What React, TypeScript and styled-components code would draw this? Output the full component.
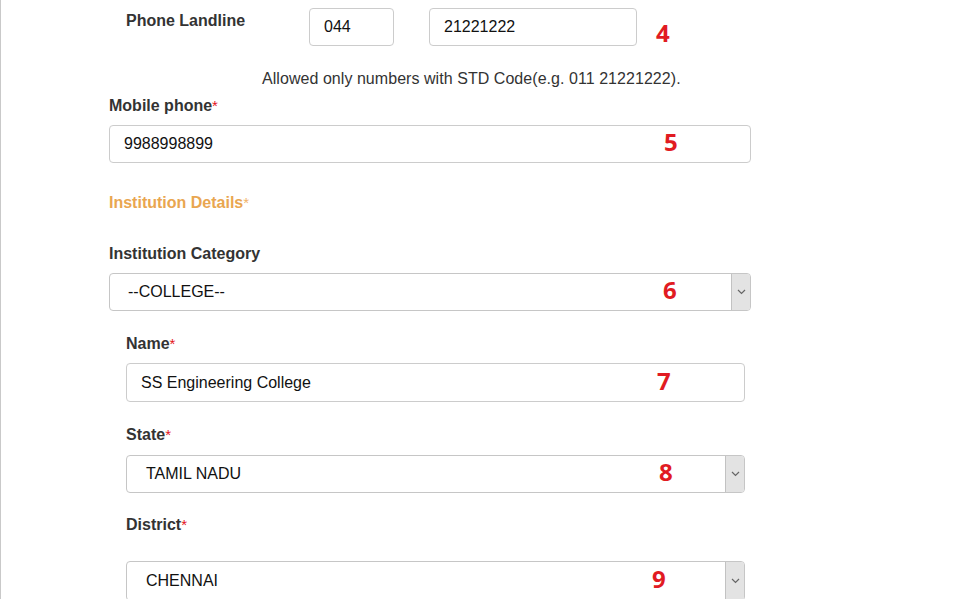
import React from "react";
import styled, { createGlobalStyle } from "styled-components";

const Global = createGlobalStyle`
  html, body { margin: 0; padding: 0; background: #fff; }
  body { font-family: "Liberation Sans", Arial, sans-serif; color: #333; }
`;

const Page = styled.div`
  width: 959px;
  height: 599px;
  box-sizing: border-box;
  border-left: 1px solid #c9c9c9;
  overflow: hidden;
  padding: 8px 0 0 108px;
`;

const Label = styled.div<{ $top?: number }>`
  font-size: 16px;
  line-height: 18px;
  font-weight: bold;
  color: #333;
  margin-top: ${(p) => p.$top ?? 0}px;
`;

const Star = styled.span<{ $soft?: boolean }>`
  color: ${(p) => (p.$soft ? "#f0b36a" : "#e4141b")};
  font-size: 15px;
  font-weight: normal;
`;

const SectionTitle = styled.div<{ $top: number }>`
  font-size: 16px;
  line-height: 18px;
  font-weight: bold;
  color: #e9a650;
  margin-top: ${(p) => p.$top}px;
`;

const LandlineRow = styled.div`
  display: flex;
  align-items: flex-start;
  padding-left: 17px;
`;

const LandlineLabel = styled(Label)`
  width: 183px;
  margin-top: 4px;
`;

const Box = styled.div<{ $w: number; $h?: number; $top?: number }>`
  position: relative;
  box-sizing: border-box;
  width: ${(p) => p.$w}px;
  height: ${(p) => p.$h ?? 38}px;
  margin-top: ${(p) => p.$top ?? 0}px;
  border: 1px solid #cccccc;
  border-radius: 4px;
  background: #fff;
  display: flex;
  align-items: center;
  padding-left: 14px;
  font-size: 16px;
  color: #111;
`;

const SelectBox = styled(Box)<{ $pad: number }>`
  padding-left: ${(p) => p.$pad}px;
  border-color: #c6c6c6;
`;

const Gap = styled.div<{ $w: number }>`
  width: ${(p) => p.$w}px;
  flex: none;
`;

const Marker = styled.div<{ $left?: number }>`
  position: ${(p) => (p.$left !== undefined ? "absolute" : "static")};
  left: ${(p) => p.$left ?? 0}px;
  top: 50%;
  transform: ${(p) => (p.$left !== undefined ? "translateY(calc(-50% - 2px))" : "none")};
  font-family: "Open Sans", "Liberation Sans", sans-serif;
  font-weight: bold;
  font-size: 24px;
  line-height: 28px;
  color: #e11b22;
`;

const LandMarker = styled(Marker)`
  margin-left: 19px;
  margin-top: 11px;
`;

const Hint = styled.div`
  font-size: 16px;
  line-height: 18px;
  color: #333;
  margin-top: 23px;
  padding-left: 153px;
  letter-spacing: 0.05px;
`;

const Indent = styled.div`
  padding-left: 17px;
`;

const ArrowBtn = styled.div`
  position: absolute;
  right: 0;
  top: 0;
  bottom: 0;
  width: 19px;
  box-sizing: border-box;
  background: #e3e3e3;
  border-left: 1px solid #c2c2c2;
  border-radius: 0 3px 3px 0;
  display: flex;
  align-items: center;
  justify-content: center;
`;

const Arrow = () => (
  <ArrowBtn>
    <svg width="9" height="6" viewBox="0 0 9 6">
      <path d="M1 1 L4.5 4.5 L8 1" fill="none" stroke="#666" strokeWidth="1.2" />
    </svg>
  </ArrowBtn>
);

export default function App() {
  return (
    <>
      <Global />
      <Page>
        <LandlineRow>
          <LandlineLabel>Phone Landline</LandlineLabel>
          <Box $w={85}>044</Box>
          <Gap $w={35} />
          <Box $w={208}>21221222</Box>
          <LandMarker>4</LandMarker>
        </LandlineRow>
        <Hint>Allowed only numbers with STD Code(e.g. 011 21221222).</Hint>

        <Label $top={9}>
          Mobile phone<Star>*</Star>
        </Label>
        <Box $w={642} $top={10}>
          9988998899
          <Marker $left={554}>5</Marker>
        </Box>

        <SectionTitle $top={31}>
          Institution Details<Star $soft>*</Star>
        </SectionTitle>

        <Label $top={33}>Institution Category</Label>
        <SelectBox $w={642} $top={10} $pad={18}>
          --COLLEGE--
          <Marker $left={553}>6</Marker>
          <Arrow />
        </SelectBox>

        <Indent>
          <Label $top={24}>
            Name<Star>*</Star>
          </Label>
          <Box $w={619} $h={39} $top={10}>
            SS Engineering College
            <Marker $left={530}>7</Marker>
          </Box>

          <Label $top={24}>
            State<Star>*</Star>
          </Label>
          <SelectBox $w={619} $top={11} $h={38} $pad={19}>
            TAMIL NADU
            <Marker $left={532}>8</Marker>
            <Arrow />
          </SelectBox>

          <Label $top={23}>
            District<Star>*</Star>
          </Label>
          <SelectBox $w={619} $top={27} $h={40} $pad={19}>
            CHENNAI
            <Marker $left={525}>9</Marker>
            <Arrow />
          </SelectBox>
        </Indent>
      </Page>
    </>
  );
}
